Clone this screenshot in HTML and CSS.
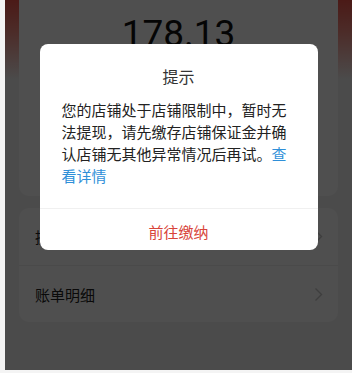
FILE: index.html
```html
<!DOCTYPE html>
<html lang="zh-CN">
<head>
<meta charset="utf-8">
<link rel="stylesheet" href="styles.css">
</head>
<body>
<div class="screen">
  <div class="header-bg"></div>
  <div class="content">
    <div class="card balance-card">
      <div class="amount">178.13</div>
    </div>
    <div class="card list-card">
      <div class="row">
        <span class="row-label">提现记录</span>
        <svg class="chev" width="9" height="15" viewBox="0 0 9 15"><path d="M1.5 1.5l6 6-6 6" fill="none" stroke="currentColor" stroke-width="1.4"/></svg>
      </div>
      <div class="row">
        <span class="row-label">账单明细</span>
        <svg class="chev" width="9" height="15" viewBox="0 0 9 15"><path d="M1.5 1.5l6 6-6 6" fill="none" stroke="currentColor" stroke-width="1.4"/></svg>
      </div>
    </div>
  </div>
  <div class="overlay">
    <div class="dialog">
      <div class="dialog-title">提示</div>
      <div class="dialog-body">您的店铺处于店铺限制中，暂时无法提现，请先缴存店铺保证金并确认店铺无其他异常情况后再试。<span class="link">查看详情</span></div>
      <div class="dialog-action">前往缴纳</div>
    </div>
  </div>
</div>
</body>
</html>
```
FILE: styles.css
```css
* { box-sizing: border-box; }
html, body { margin: 0; padding: 0; }
body {
  background: #f4f4f4;
  width: 352px;
  height: 373px;
  overflow: hidden;
  font-family: "Noto Sans CJK SC", "Noto Sans", sans-serif;
}
.screen {
  position: relative;
  margin-left: 5px;
  width: 347px;
  height: 370px;
  background: #f3f3f3;
  overflow: hidden;
}
.header-bg {
  position: absolute;
  left: 0; top: 0; right: 0;
  height: 80px;
  background: linear-gradient(to bottom, #f0544a 0%, #f58e84 40%, #f3f3f3 100%);
}
.content {
  position: relative;
  padding: 0 14px;
  display: flex;
  flex-direction: column;
  gap: 12px;
}
.card {
  background: #ffffff;
  border-radius: 10px;
}
.balance-card {
  border-radius: 0 0 10px 10px;
  height: 196px;
  padding-top: 12px;
  display: flex;
  flex-direction: column;
  align-items: center;
}
.amount {
  font-family: Roboto, "Liberation Sans", sans-serif;
  font-size: 37px;
  line-height: 44px;
  color: #111;
}
.list-card {
  display: flex;
  flex-direction: column;
}
.row {
  height: 57px;
  padding: 0 15px 0 16px;
  display: flex;
  align-items: center;
  justify-content: space-between;
}
.row + .row { border-top: 1px solid #eee; }
.row-label {
  font-size: 15px;
  color: #222;
}
.chev { color: #c8c8c8; display: block; }
.overlay {
  position: absolute;
  inset: 0;
  background: rgba(0, 0, 0, 0.69);
  display: flex;
  flex-direction: column;
  align-items: center;
  padding-top: 44px;
}
.dialog {
  width: 278px;
  background: #fff;
  border-radius: 8px;
  display: flex;
  flex-direction: column;
}
.dialog-title {
  padding-top: 21px;
  font-size: 16px;
  line-height: 22px;
  color: #333;
  text-align: center;
}
.dialog-body {
  margin-top: 12px;
  padding: 0 22px 21px 22px;
  font-size: 15px;
  line-height: 22px;
  color: #222;
}
.link { color: #2f8fd8; }
.dialog-action {
  border-top: 1px solid #f0f0f0;
  height: 42px;
  padding-top: 3px;
  display: flex;
  align-items: center;
  justify-content: center;
  font-size: 15px;
  color: #d8443a;
}
```
